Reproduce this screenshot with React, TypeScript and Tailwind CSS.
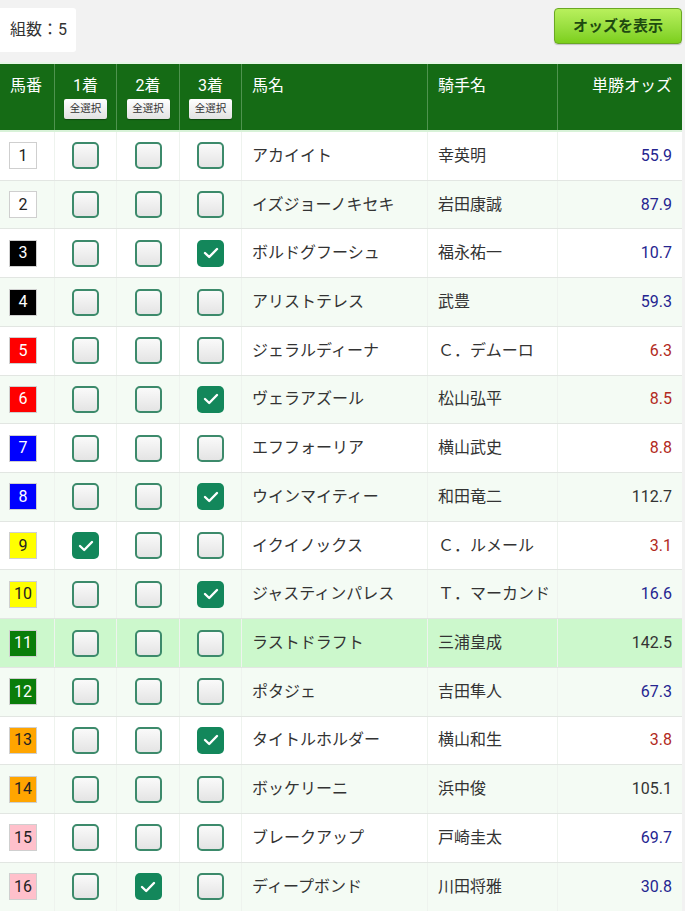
import React from "react";

type Row = { n: number; name: string; jockey: string; odds: string; c: [boolean, boolean, boolean] };

const rows: Row[] = [
  { n: 1, name: "アカイイト", jockey: "幸英明", odds: "55.9", c: [false, false, false] },
  { n: 2, name: "イズジョーノキセキ", jockey: "岩田康誠", odds: "87.9", c: [false, false, false] },
  { n: 3, name: "ボルドグフーシュ", jockey: "福永祐一", odds: "10.7", c: [false, false, true] },
  { n: 4, name: "アリストテレス", jockey: "武豊", odds: "59.3", c: [false, false, false] },
  { n: 5, name: "ジェラルディーナ", jockey: "Ｃ．デムーロ", odds: "6.3", c: [false, false, false] },
  { n: 6, name: "ヴェラアズール", jockey: "松山弘平", odds: "8.5", c: [false, false, true] },
  { n: 7, name: "エフフォーリア", jockey: "横山武史", odds: "8.8", c: [false, false, false] },
  { n: 8, name: "ウインマイティー", jockey: "和田竜二", odds: "112.7", c: [false, false, true] },
  { n: 9, name: "イクイノックス", jockey: "Ｃ．ルメール", odds: "3.1", c: [true, false, false] },
  { n: 10, name: "ジャスティンパレス", jockey: "Ｔ．マーカンド", odds: "16.6", c: [false, false, true] },
  { n: 11, name: "ラストドラフト", jockey: "三浦皇成", odds: "142.5", c: [false, false, false] },
  { n: 12, name: "ポタジェ", jockey: "吉田隼人", odds: "67.3", c: [false, false, false] },
  { n: 13, name: "タイトルホルダー", jockey: "横山和生", odds: "3.8", c: [false, false, true] },
  { n: 14, name: "ボッケリーニ", jockey: "浜中俊", odds: "105.1", c: [false, false, false] },
  { n: 15, name: "ブレークアップ", jockey: "戸崎圭太", odds: "69.7", c: [false, false, false] },
  { n: 16, name: "ディープボンド", jockey: "川田将雅", odds: "30.8", c: [false, true, false] },
];

const frameClass = (n: number) => {
  if (n <= 2) return "bg-white text-[#222]";
  if (n <= 4) return "bg-black text-white";
  if (n <= 6) return "bg-[#ff0000] text-white";
  if (n <= 8) return "bg-[#0000ff] text-white";
  if (n <= 10) return "bg-[#ffff00] text-[#222]";
  if (n <= 12) return "bg-[#0a7d0a] text-white";
  if (n <= 14) return "bg-[#ffa500] text-[#222]";
  return "bg-[#ffc0cb] text-[#222]";
};

const oddsClass = (o: string) => {
  const v = parseFloat(o);
  if (v < 10) return "text-[#b22a22]";
  if (v < 100) return "text-[#252590]";
  return "text-[#333]";
};

function Check({ on }: { on: boolean }) {
  if (on) {
    return (
      <div className="w-[27px] h-[27px] rounded-[5px] bg-[#13875b] flex items-center justify-center">
        <svg width="16" height="12" viewBox="0 0 16 12" fill="none">
          <path d="M2 6 L6.2 10 L14 2" stroke="white" strokeWidth="2.4" strokeLinecap="round" strokeLinejoin="round" />
        </svg>
      </div>
    );
  }
  return (
    <div className="w-[27px] h-[27px] rounded-[5px] border-2 border-[#3c8a6b] bg-gradient-to-b from-[#fafafa] to-[#e4e4e4]" />
  );
}

function SelAll() {
  return (
    <div className="mt-[1px] w-[43px] h-[20px] rounded-[2px] bg-gradient-to-b from-white to-[#e2e2e2] shadow-[0_1px_1px_rgba(0,0,0,0.35)] flex items-center justify-center text-[10.5px] text-[#333]">
      全選択
    </div>
  );
}

const cols = "grid grid-cols-[55px_62px_63px_62px_186px_130px_124px]";

export default function App() {
  return (
    <div
      className="w-[685px] h-[911px] overflow-hidden bg-[#f2f2f2]"
      style={{ fontFamily: 'Roboto, "Noto Sans CJK JP", sans-serif' }}
    >
      <div className="h-[62px] flex items-start justify-between pt-[8px] pr-[3px]">
        <div className="h-[44px] w-[76px] bg-white rounded-r-[3px] flex items-center pl-[10px] text-[16px] text-[#333]">
          組数：5
        </div>
        <div className="h-[36px] w-[128px] rounded-[4px] border border-[#6aa823] bg-gradient-to-b from-[#b8f05c] to-[#7ccf1a] flex items-center justify-center text-[15px] font-bold text-[#1e4a10] shadow-[0_1px_1px_rgba(0,0,0,0.2)]">
          オッズを表示
        </div>
      </div>
      <div className="w-[682px]">
        <div className={`${cols} h-[70px] bg-[#156b15] border-t-[2px] border-t-[#e8f7e8] border-b-[2px] border-b-[#d8f2d8] text-white text-[16px] leading-[24px]`}>
          <div className="border-r border-[#4f934f] pl-[10px] pt-[10px]">馬番</div>
          {["1着", "2着", "3着"].map((t) => (
            <div key={t} className="border-r border-[#4f934f] pt-[10px] flex flex-col items-center">
              <div>{t}</div>
              <SelAll />
            </div>
          ))}
          <div className="border-r border-[#4f934f] pl-[10px] pt-[10px]">馬名</div>
          <div className="border-r border-[#4f934f] pl-[10px] pt-[10px]">騎手名</div>
          <div className="pr-[10px] pt-[10px] text-right">単勝オッズ</div>
        </div>
        {rows.map((r, i) => {
          const bg = r.n === 11 ? "bg-[#ccf8cc]" : i % 2 === 0 ? "bg-white" : "bg-[#f4fbf4]";
          return (
            <div key={r.n} className={`${cols} h-[48.73px] border-b border-[#e2e6e2] ${bg} text-[16px] text-[#333]`}>
              <div className="border-r border-[#eef3ee] flex items-center pl-[9px]">
                <div className={`w-[28px] h-[27px] border border-[#cfcfcf] flex items-center justify-center text-[16px] ${frameClass(r.n)}`}>
                  {r.n}
                </div>
              </div>
              {r.c.map((on, k) => (
                <div key={k} className="border-r border-[#eef3ee] flex items-center justify-center">
                  <Check on={on} />
                </div>
              ))}
              <div className="border-r border-[#eef3ee] flex items-center pl-[10px] whitespace-nowrap">{r.name}</div>
              <div className="border-r border-[#eef3ee] flex items-center pl-[10px] whitespace-nowrap">{r.jockey}</div>
              <div className={`flex items-center justify-end pr-[10px] ${oddsClass(r.odds)}`}>{r.odds}</div>
            </div>
          );
        })}
      </div>
    </div>
  );
}
